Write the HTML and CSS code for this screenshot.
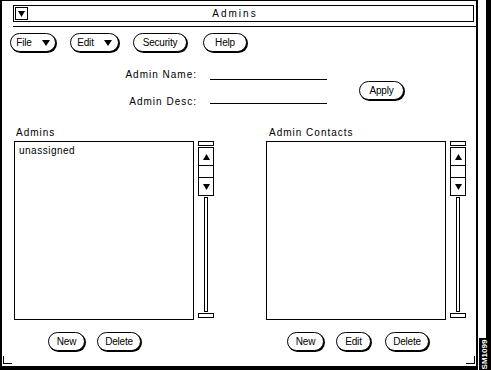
FILE: index.html
```html
<!DOCTYPE html>
<html lang="en">
  <head>
    <meta charset="UTF-8" />
    <title>Admins</title>
    <link rel="stylesheet" href="styles.css">
  </head>
  <body>
    <div class="screen">
      <div class="window">
        <div class="titlebar">
          <span class="winmenu">
            <svg width="7" height="6" viewBox="0 0 7 6"><path d="M0 0h7L3.5 6z" fill="#000"/></svg>
          </span>
          <span class="title">Admins</span>
        </div>
        <div class="title-rule"></div>

        <div class="content">
          <div class="menubar">
            <button class="btn menu-btn w-file">File <svg width="8" height="6" viewBox="0 0 8 6"><path d="M0 0h8L4 6z" fill="#000"/></svg></button>
            <button class="btn menu-btn w-edit">Edit <svg width="8" height="6" viewBox="0 0 8 6"><path d="M0 0h8L4 6z" fill="#000"/></svg></button>
            <button class="btn w-security">Security</button>
            <button class="btn w-help">Help</button>
          </div>

          <div class="fields">
            <label class="field-label">Admin Name:</label>
            <span class="field"></span>
            <button class="btn apply">Apply</button>
            <label class="field-label">Admin Desc:</label>
            <span class="field field-desc"></span>
          </div>

          <div class="lists">
            <div class="panel">
              <div class="panel-label">Admins</div>
              <div class="panel-body">
                <div class="listbox">
                  <div class="item">unassigned</div>
                </div>
                <div class="scrollbar">
                  <div class="sb-cap"></div>
                  <div class="sb-arrows">
                    <div class="sb-up"><svg width="7" height="6" viewBox="0 0 7 6"><path d="M3.5 0L7 6H0z" fill="#000"/></svg></div>
                    <div class="sb-gap"></div>
                    <div class="sb-down"><svg width="7" height="6" viewBox="0 0 7 6"><path d="M0 0h7L3.5 6z" fill="#000"/></svg></div>
                  </div>
                  <div class="sb-trough"></div>
                  <div class="sb-cap"></div>
                </div>
              </div>
              <div class="actions left-actions">
                <button class="btn w-new">New</button>
                <button class="btn w-delete">Delete</button>
              </div>
            </div>

            <div class="panel">
              <div class="panel-label panel-label-right">Admin Contacts</div>
              <div class="panel-body">
                <div class="listbox"></div>
                <div class="scrollbar">
                  <div class="sb-cap"></div>
                  <div class="sb-arrows">
                    <div class="sb-up"><svg width="7" height="6" viewBox="0 0 7 6"><path d="M3.5 0L7 6H0z" fill="#000"/></svg></div>
                    <div class="sb-gap"></div>
                    <div class="sb-down"><svg width="7" height="6" viewBox="0 0 7 6"><path d="M0 0h7L3.5 6z" fill="#000"/></svg></div>
                  </div>
                  <div class="sb-trough"></div>
                  <div class="sb-cap"></div>
                </div>
              </div>
              <div class="actions right-actions">
                <button class="btn w-new">New</button>
                <button class="btn w-edit2">Edit</button>
                <button class="btn w-delete w-delete-right">Delete</button>
              </div>
            </div>
          </div>
        </div>
      </div>
      <div class="side">
        <div class="side-bar"></div>
        <div class="fig-id"><span>SM1099</span></div>
      </div>
    </div>
  </body>
</html>
```

FILE: styles.css
```css
body {
  margin: 0;
  background: #fff;
  font-family: "Liberation Sans", Arial, sans-serif;
  font-size: 10px;
  color: #000;
}
.screen {
  display: flex;
  width: 491px;
  height: 370px;
  overflow: hidden;
}
.window {
  position: relative;
  width: 478px;
  height: 370px;
  box-sizing: border-box;
  border-left: 2px solid #000;
  border-right: 2px solid #000;
  border-top: 1px solid #000;
  border-bottom: 4px solid #000;
  display: flex;
  flex-direction: column;
}
/* resize corner marks of the frame */
.window::before,
.window::after {
  content: "";
  position: absolute;
  bottom: 2px;
  width: 8px;
  height: 7px;
  border-bottom: 1px solid #000;
}
.window::before {
  left: 1px;
  border-left: 1px solid #000;
}
.window::after {
  right: 1px;
  border-right: 1px solid #000;
}
.titlebar {
  margin: 4px 2px 0 11px;
  height: 17px;
  box-sizing: border-box;
  border: 1px solid #000;
  display: flex;
  align-items: center;
}
.winmenu {
  width: 13px;
  height: 13px;
  margin-left: 1px;
  box-sizing: border-box;
  border: 1px solid #000;
  display: flex;
  align-items: center;
  justify-content: center;
}
.title {
  flex: 1;
  text-align: center;
  letter-spacing: 2px;
  margin-right: 31px;
}
.title-rule {
  margin: 4px 0 0 11px;
  height: 1px;
  background: #000;
}
.content {
  padding-left: 8px;
}
.btn {
  font-family: inherit;
  font-size: 10px;
  color: #000;
  background: #fff;
  height: 19px;
  padding: 0;
  box-sizing: border-box;
  border: 1px solid #000;
  border-radius: 10px;
  box-shadow: 1px 1px 0 #000;
  display: inline-flex;
  align-items: center;
  justify-content: center;
  letter-spacing: -0.2px;
}
.menubar {
  display: flex;
  gap: 14px;
  margin-top: 6px;
}
.menu-btn {
  gap: 10px;
}
.w-file { width: 46px; }
.w-edit { width: 49px; }
.w-security { width: 54px; }
.w-help { width: 44px; margin-left: 2px; }
.fields {
  display: grid;
  grid-template-columns: 187px 117px 1fr;
  grid-template-rows: 13px 13px;
  column-gap: 13px;
  row-gap: 14px;
  margin-top: 16px;
}
.field-label {
  text-align: right;
  line-height: 13px;
  letter-spacing: 1px;
}
.field {
  height: 11px;
  border-bottom: 1px solid #000;
}
.field-desc {
  height: 8px;
}
.apply {
  grid-column: 3;
  grid-row: 1 / 3;
  width: 45px;
  margin: 13px 0 0 19px;
  align-self: start;
}
.lists {
  display: flex;
  gap: 52px;
  margin: 18px 0 0 4px;
}
.panel {
  width: 200px;
}
.panel-label {
  line-height: 13px;
  padding-left: 2px;
  letter-spacing: 1px;
  margin-bottom: 2px;
}
.panel-label-right {
  padding-left: 3px;
}
.panel-body {
  display: flex;
  gap: 4px;
  height: 179px;
}
.listbox {
  width: 180px;
  box-sizing: border-box;
  border: 1px solid #000;
  padding: 3px 4px;
}
.item {
  letter-spacing: 0.5px;
  line-height: 12px;
}
.scrollbar {
  width: 16px;
  display: flex;
  flex-direction: column;
  align-items: center;
  gap: 1px;
  height: 177px;
}
.sb-cap {
  width: 16px;
  height: 5px;
  box-sizing: border-box;
  border: 1px solid #000;
}
.sb-arrows {
  width: 16px;
  height: 49px;
  box-sizing: border-box;
  border: 1px solid #000;
  display: flex;
  flex-direction: column;
}
.sb-up,
.sb-down {
  height: 17px;
  display: flex;
  align-items: center;
  justify-content: center;
}
.sb-up {
  border-bottom: 1px solid #000;
}
.sb-down {
  border-top: 1px solid #000;
}
.sb-gap {
  flex: 1;
}
.sb-trough {
  flex: 1;
  width: 4px;
  box-sizing: border-box;
  border: 1px solid #000;
}
.actions {
  display: flex;
  gap: 12px;
  margin-top: 12px;
}
.left-actions { padding-left: 34px; }
.right-actions { padding-left: 21px; }
.w-new { width: 37px; }
.w-delete { width: 44px; }
.w-delete-right { margin-left: 2px; }
.w-edit2 { width: 35px; }
.side {
  width: 13px;
  display: flex;
  flex-direction: column;
  align-items: flex-end;
}
.side-bar {
  flex: 1;
  width: 5px;
  background: #000;
}
.fig-id {
  width: 12px;
  height: 32px;
  background: #000;
  color: #fff;
  display: flex;
  align-items: center;
  justify-content: center;
}
.fig-id span {
  transform: rotate(-90deg);
  font-size: 8px;
  font-weight: bold;
  white-space: nowrap;
}
```
